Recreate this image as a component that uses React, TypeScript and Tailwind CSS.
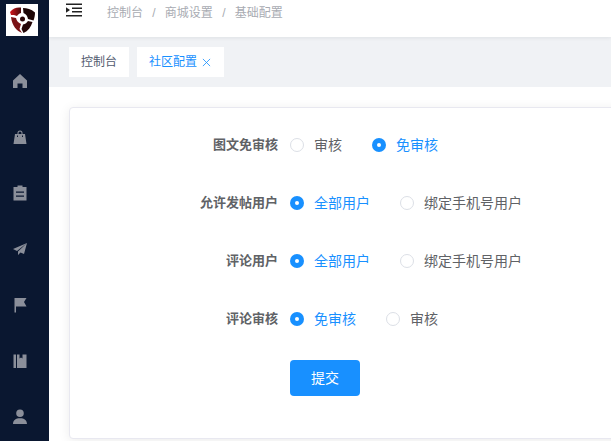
const font = { fontFamily: '"Liberation Sans", "Noto Sans CJK SC", sans-serif' };

function Icon({ d }: { d: string }) {
  return (
    <div className="flex h-[56px] w-full items-center justify-start pl-[12px]">
      <svg viewBox="0 0 16 16" className="h-[16px] w-[16px] fill-[#8b8f9a]"><path d={d} fillRule="evenodd" /></svg>
    </div>
  );
}

const icons = [
  "M8 1 15 7.500V15h-4.500v-4.500h-5V15H1V7.500z",
  "M5.500 5V4a2.500 2.500 0 0 1 5 0v1H13l1.500 10h-13L3 5zM6.500 5h3V4a1.500 1.500 0 0 0-3 0zM5 6.500h1V8H5zM10 6.500h1V8h-1z",
  "M5.500 .5h5V2H14.500V15.500H1.500V2h4zM4 6.500v1.300h8V6.500zM4 10.500v1.300h8v-1.300z",
  "M15 2 1 8l4 2zM15 2 6 10.500V14l2.500-2.500L12 13z",
  "M2.500 1h12L12 5l2.500 4.500H4V15.500H2.500z",
  "M1.500 1.500H4V15H1.500zM5 1.500h2.500v4L9 4.500l1.500 1v-4h4V15H5z",
  "M8 .500a3.800 3.800 0 1 1 0 7.600 3.800 3.800 0 0 1 0-7.600zM1 15c0-3.800 2.800-5.800 7-5.800s7 2 7 5.800z",
];

function Radio({ label, checked, className }: { label: string; checked?: boolean; className?: string }) {
  return (
    <label className={`flex items-center ${className ?? ""}`}>
      {checked ? (
        <span className="flex h-[14px] w-[14px] items-center justify-center rounded-full bg-[#1890ff]">
          <span className="h-[4px] w-[4px] rounded-full bg-white" />
        </span>
      ) : (
        <span className="h-[14px] w-[14px] rounded-full border border-[#dcdfe6] bg-white" />
      )}
      <span className={`ml-[10px] text-[14px] leading-none ${checked ? "text-[#1890ff]" : "text-[#606266]"}`}>{label}</span>
    </label>
  );
}

function Row({ label, children }: { label: string; children: React.ReactNode }) {
  return (
    <div className="flex h-[40px] items-center">
      <div className="w-[208px] text-right text-[13px] font-bold text-[#606266]">{label}</div>
      <div className="ml-[12px] flex items-center">{children}</div>
    </div>
  );
}

export default function App() {
  return (
    <div className="flex h-[441px] w-[611px] overflow-hidden bg-white" style={font}>
      <aside className="flex w-[49px] shrink-0 flex-col bg-[#0a1730]">
        <div className="ml-[6px] mt-[4px] flex h-[32px] w-[32px] items-center justify-center bg-white">
          <svg viewBox="0 0 32 32" className="h-[32px] w-[32px]">
            <defs>
              <linearGradient id="lobe" x1="0" y1="0" x2="1" y2="0">
                <stop offset="0" stopColor="#d4141c" />
                <stop offset="1" stopColor="#4a0a0c" />
              </linearGradient>
            </defs>
            <path d="M4 8C7 4 11 3 15 3.500L15 9C13 9.500 12 10.500 11 12L8 11 5 11z" fill="url(#lobe)" />
            <path d="M17 4C21 4 25 5 29 8.500C29 11 28.500 14 27.500 16.500L22 15C21.500 12 20 10 17.500 9z" fill="#1c0506" />
            <path d="M5 13L10 14C10.500 16.500 12 18.500 15 20L13.500 25 16 29C11 27 6 22 5 13z" fill="#7a1216" />
            <path d="M26.500 18C25 23 22 27 17.500 29L15.500 25 17 20.500C19.500 20 21 18.500 22 17z" fill="#240607" />
            <circle cx="16.500" cy="15" r="2.500" fill="#2a0709" />
          </svg>
        </div>
        <div className="mt-[17px] flex flex-col">
          {icons.map((d, i) => (
            <Icon key={i} d={d} />
          ))}
        </div>
      </aside>
      <main className="flex min-w-0 flex-1 flex-col">
        <header className="relative z-10 flex h-[37px] shrink-0 items-start bg-white pl-[17px] pt-[3px] shadow-[0_1px_4px_rgba(0,21,41,0.08)]">
          <svg viewBox="0 0 16 14" className="h-[14px] w-[16px]">
            <path d="M0 0.500h16v1.600H0zM6 4.400h10V6H6zM6 8h10v1.600H6zM0 12h16v1.600H0z" fill="#222" />
            <path d="M0 4.200 4 7 0 9.800z" fill="#222" />
          </svg>
          <nav className="ml-[25px] flex text-[12px] leading-[20px] text-[#a8abb2]">
            <span>控制台</span>
            <span className="mx-[9.25px]">/</span>
            <span>商城设置</span>
            <span className="mx-[9.25px]">/</span>
            <span>基础配置</span>
          </nav>
        </header>
        <div className="flex h-[50px] shrink-0 gap-[8px] bg-[#f0f2f5] pl-[20px] pt-[10px]">
          <div className="flex h-[30px] items-center bg-white px-[12px] text-[12px] text-[#515a6e]">控制台</div>
          <div className="flex h-[30px] items-center bg-white pl-[12px] pr-[13px] text-[12px] text-[#1890ff]">
            社区配置
            <svg viewBox="0 0 10 10" className="ml-[5px] h-[9px] w-[9px] stroke-[#1890ff]"><path d="M1 1l8 8M9 1l-8 8" fill="none" strokeWidth="0.9" /></svg>
          </div>
        </div>
        <section className="ml-[20px] mt-[20px] h-[332px] w-[600px] shrink-0 rounded-[4px] border border-[#e8e8f0] bg-white pt-[17px] shadow-[0_2px_12px_rgba(0,0,0,0.08)]">
          <div className="flex flex-col gap-[18px]">
            <Row label="图文免审核">
              <Radio label="审核" />
              <Radio label="免审核" checked className="ml-[30px]" />
            </Row>
            <Row label="允许发帖用户">
              <Radio label="全部用户" checked />
              <Radio label="绑定手机号用户" className="ml-[30px]" />
            </Row>
            <Row label="评论用户">
              <Radio label="全部用户" checked />
              <Radio label="绑定手机号用户" className="ml-[30px]" />
            </Row>
            <Row label="评论审核">
              <Radio label="免审核" checked />
              <Radio label="审核" className="ml-[30px]" />
            </Row>
          </div>
          <button className="ml-[220px] mt-[21px] h-[36px] w-[70px] rounded-[4px] bg-[#1890ff] text-[14px] text-white">提交</button>
        </section>
      </main>
    </div>
  );
}
